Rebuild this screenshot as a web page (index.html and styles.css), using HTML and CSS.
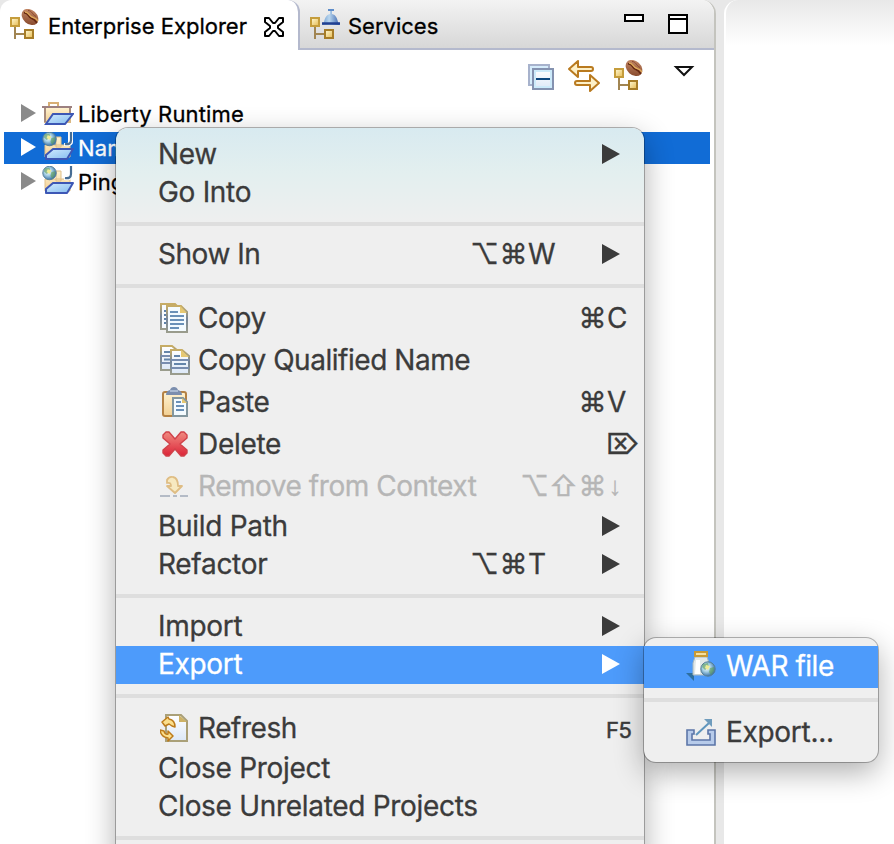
FILE: index.html
```html
<!DOCTYPE html>
<html lang="en">
<head>
<meta charset="utf-8">
<title>Enterprise Explorer</title>
<link rel="stylesheet" href="styles.css">
</head>
<body>
<svg class="defs" width="0" height="0" aria-hidden="true">
  <defs>
    <linearGradient id="gold" x1="0" y1="0" x2="1" y2="1"><stop offset="0" stop-color="#fffbd8"/><stop offset="1" stop-color="#e6b94e"/></linearGradient>
    <linearGradient id="bean" x1="0" y1="0" x2="1" y2="1"><stop offset="0" stop-color="#ce9472"/><stop offset="1" stop-color="#7e3f22"/></linearGradient>
    <linearGradient id="flask" x1="0" y1="0" x2="1" y2="0"><stop offset="0" stop-color="#6d9bd0"/><stop offset=".4" stop-color="#b9d6ee"/><stop offset="1" stop-color="#3862ac"/></linearGradient>
    <linearGradient id="tan" x1="0" y1="0" x2="0" y2="1"><stop offset="0" stop-color="#fff3d2"/><stop offset="1" stop-color="#f2cf92"/></linearGradient>
    <linearGradient id="lid" x1="0" y1="0" x2="1" y2="1"><stop offset="0" stop-color="#d2ebff"/><stop offset="1" stop-color="#83bbee"/></linearGradient>
    <linearGradient id="red" x1="0" y1="0" x2="0" y2="1"><stop offset="0" stop-color="#f08a80"/><stop offset="1" stop-color="#dc2438"/></linearGradient>
    <linearGradient id="paper" x1="0" y1="0" x2="0" y2="1"><stop offset="0" stop-color="#ffffff"/><stop offset="1" stop-color="#dce8f7"/></linearGradient>
    <linearGradient id="edge" x1="0" y1="0" x2="0" y2="1"><stop offset="0" stop-color="#c8ad65"/><stop offset=".5" stop-color="#75869b"/><stop offset="1" stop-color="#9a9c8c"/></linearGradient>
    <radialGradient id="globe" cx=".4" cy=".4" r=".65"><stop offset="0" stop-color="#ffffff"/><stop offset=".45" stop-color="#a5cfe4"/><stop offset="1" stop-color="#2d65a0"/></radialGradient>
    <symbol id="i-nodes" viewBox="0 0 30 32">
      <path d="M5 17v13M5 25h10" stroke="#a18552" stroke-width="2" fill="none"/>
      <rect x="1" y="9" width="8" height="8" fill="url(#gold)" stroke="#c59d3c" stroke-width="2"/>
      <rect x="15" y="21" width="8" height="8" fill="url(#gold)" stroke="#a77d28" stroke-width="2"/>
    </symbol>
    <symbol id="i-explorer" viewBox="0 0 30 32">
      <use href="#i-nodes" width="30" height="32"/>
      <ellipse cx="20" cy="8" rx="9.3" ry="7" transform="rotate(42 20 8)" fill="url(#bean)"/>
      <path d="M14 4c4-1 4 4 7 5s4 2 6 5" stroke="#64270f" stroke-width="1.6" fill="none"/>
      <path d="M15 3c4 0 4 4 7 5s4 1 6 4" stroke="#dea95a" stroke-width="1.4" fill="none"/>
      <path d="M18 1.500c4 0 4 4 8 6" stroke="#8c4a2c" stroke-width="1" fill="none"/>
    </symbol>
    <symbol id="i-services" viewBox="0 0 30 32">
      <use href="#i-nodes" width="30" height="32"/>
      <path d="M18 0h6v2h-2v3c4 1 5 4 6 8l2 3H12l2-3c1-4 2-7 6-8V2h-2z" fill="url(#flask)"/>
      <path d="M12 14.500h18" stroke="#203f91" stroke-width="2.500"/><path d="M18 1h6" stroke="#5e8dca" stroke-width="2"/>
    </symbol>
    <symbol id="i-globe" viewBox="0 0 16 16">
      <circle cx="8" cy="8" r="7.200" fill="url(#globe)" stroke="#557f96"/>
      <path d="M3 3l5-1 1 4-4 3-3-3zM10 7l4-1v4l-3 4-2-3z" fill="#5e9d54" opacity=".6"/><path d="M6 4l4 1-2 4-3-2z" fill="#efec96"/>
    </symbol>
    <symbol id="i-folder" viewBox="0 0 32 24">
      <path d="M7 4V1h9v3" fill="none" stroke="#d8af75" stroke-width="2"/>
      <path d="M3 5v15h25V5z" fill="url(#tan)" stroke="#dab883" stroke-width="2"/>
      <path d="M0 5h30" stroke="#9c8080" stroke-width="2"/><path d="M3 6v14M28 6v7" stroke="#a78b7c" stroke-width="2"/>
      <path d="M11 12h20l-8 10H4z" fill="url(#lid)" stroke="#3d57b5" stroke-width="2"/>
    </symbol>
    <symbol id="i-project" viewBox="0 0 32 30">
      <path d="M3 13h25v12H3zM14 5h5v10h-5z" fill="url(#tan)" stroke="#e0c08a" stroke-width="1"/>
      <path d="M11 17h20l-6 10H4v-4z" fill="url(#lid)" stroke="#3d57b5" stroke-width="2" stroke-linejoin="round"/>
      <use href="#i-globe" x="0" y="-1" width="15" height="16"/>
      <path d="M26 0h5v10q0 5-9 4v-3q4 1 4-1z" fill="#fff"/><path d="M29 0v8q0 5-6 4" stroke="#476d94" stroke-width="2.200" fill="none"/>
    </symbol>
    <symbol id="i-copy" viewBox="0 0 28 30">
      <path d="M1 1h14l4 4v21H1z" fill="#f7fbff" stroke="url(#edge)" stroke-width="2"/>
      <path d="M4 8h4M4 12h4M4 16h4M4 20h4" stroke="#5e82a8" stroke-width="2"/>
      <path d="M7 3h14l6 6v20H7z" fill="#f4fbff" stroke="url(#edge)" stroke-width="2"/>
      <path d="M20 3v7h7z" fill="#e6c872"/>
      <path d="M10 9h8M10 13h14M10 17h14M10 21h14M10 25h9" stroke="#6b91b8" stroke-width="2"/>
    </symbol>
    <symbol id="i-copyq" viewBox="0 0 30 30">
      <path d="M1 1h11l6 5v19H1z" fill="url(#paper)" stroke="url(#edge)" stroke-width="2"/>
      <path d="M1 11h17M1 18h17" stroke="#788daf" stroke-width="2"/><path d="M4 7h7M4 14.500h8" stroke="#6485aa" stroke-width="2"/>
      <path d="M11 5h11l7 6v18H11z" fill="url(#paper)" stroke="url(#edge)" stroke-width="2"/>
      <path d="M21 5v7h8z" fill="#e6c872"/><path d="M11 15h18M11 23h18" stroke="#788daf" stroke-width="2"/><path d="M14 11h6M14 19h12" stroke="#6485aa" stroke-width="2"/>
    </symbol>
    <symbol id="i-paste" viewBox="0 0 28 30">
      <rect x="3" y="5" width="23" height="24" rx="2" fill="url(#tan)" stroke="#b58244" stroke-width="2"/>
      <path d="M6 8q0-4 4-5 1-3 4-3t4 3q4 1 4 5z" fill="#7b8eae"/><path d="M10 4h8" stroke="#a9bad2" stroke-width="2"/>
      <path d="M13 11h10l4 4v14H13z" fill="#f4fbff" stroke="#83979f" stroke-width="2"/><path d="M22 11v5h5z" fill="#e6c872"/>
      <path d="M16 15h5M16 19h8M16 23h8" stroke="#6b91b8" stroke-width="2"/>
    </symbol>
    <symbol id="i-delete" viewBox="0 0 28 28">
      <path d="M3 5l3-3h3l6 7 6-7h3l3 3v3l-7 6 7 6v3l-3 3h-3l-6-7-6 7H6l-3-3v-3l7-6-7-6z" fill="url(#red)" stroke="#d0424a" stroke-width="1.400" stroke-linejoin="round"/>
    </symbol>
    <symbol id="i-remove" viewBox="0 0 28 22">
      <path d="M0 21h10M20 21h8M13 21h4" stroke="#b4bbc6" stroke-width="2"/>
      <path d="M7 5q2-4 6-3 5 1 5 9h4l-7 7-8-7h4q0-4-4-3z" fill="#f7e9c0" stroke="#dfbd84" stroke-width="1.800" stroke-linejoin="round"/>
    </symbol>
    <symbol id="i-refresh" viewBox="0 0 28 28">
      <path d="M6 1h15l6 6v20H6z" fill="url(#paper)" stroke="#aaa078" stroke-width="2"/><path d="M19 1v7h8z" fill="#cdb266"/>
      <path d="M2 8l6-5 1 2q6 1 6 8l-3-1-3-2-4 2z" fill="#fbdf8c" stroke="#bd7b1a" stroke-width="1.500" stroke-linejoin="round"/>
      <path d="M0 16l4 1q1 4 4 3v-3l5 5-5 5v-3q-7-1-8-8z" fill="#fbdf8c" stroke="#bd7b1a" stroke-width="1.500" stroke-linejoin="round"/>
    </symbol>
    <symbol id="i-war" viewBox="0 0 30 30">
      <path d="M0 22h8v8z" fill="#2d6f9f"/>
      <path d="M9 6h12l2 6v12H7V12z" fill="#e2e8e8" stroke="#a8b8bf"/><path d="M10 9h4v14h-5z" fill="#fff"/>
      <rect x="8" y="0" width="14" height="6" fill="#c89a35"/><path d="M10 3h10" stroke="#f4dfa0" stroke-width="2"/>
      <use href="#i-globe" x="14" y="10" width="16" height="16"/>
    </symbol>
    <symbol id="i-export" viewBox="0 0 30 27">
      <path d="M1 11h7v4H6v6h18v-6h-2v-4h7v15H1z" fill="#b7cbea" stroke="#5c76a8" stroke-width="1.600"/>
      <path d="M10 16L23 4" stroke="#5f95bd" stroke-width="2"/><path d="M18 0h8v8z" fill="#6f9cbd"/>
    </symbol>
  </defs>
</svg>

<main class="workbench">
  <section class="view">
    <header class="tabs">
      <div class="tab active">
        <svg class="tab-icon" width="30" height="32"><use href="#i-explorer"/></svg>
        <span>Enterprise Explorer</span>
        <svg class="close" width="22" height="22" viewBox="0 0 22 22"><path d="M2 2h4l4 5h2l4-5h4v4l-5 4v2l5 4v4h-4l-4-5h-2l-4 5H2v-4l5-4v-2L2 6z" fill="#fff" stroke="#000" stroke-width="2" stroke-linejoin="round"/></svg>
      </div>
      <div class="tab">
        <svg class="tab-icon" width="30" height="32"><use href="#i-services"/></svg>
        <span>Services</span>
      </div>
      <div class="window-buttons"><i class="min"></i><i class="max"></i></div>
    </header>
    <div class="toolbar">
      <svg width="26" height="26" viewBox="0 0 26 26"><path d="M1 1h20v20H1z" fill="#d5ecfb" stroke="#a7b2cc" stroke-width="2"/><path d="M5 5h20v20H5z" fill="url(#paper)" stroke="#8492b0" stroke-width="2"/><path d="M7 7h16v16H7z" fill="none" stroke="#cceafa" stroke-width="2"/><path d="M8 15h14" stroke="#0d477e" stroke-width="2"/></svg>
      <svg class="link" width="32" height="32" viewBox="0 0 32 32"><path d="M1 9l9-8v6h13q2 0 2 2t-2 2H10v6zM31 23l-9 8v-6H9q-2 0-2-2t2-2h13v-6z" fill="#fdf0c8" stroke="#b97a1f" stroke-width="2" stroke-linejoin="round"/></svg>
      <svg class="focus" width="30" height="32"><use href="#i-explorer"/></svg>
      <svg class="caret" width="20" height="11" viewBox="0 0 20 11"><path d="M2 1h16l-8 8z" fill="#fff" stroke="#111" stroke-width="2"/></svg>
    </div>
    <div class="tree">
      <div class="node"><i class="twist"></i><svg class="f" width="32" height="24"><use href="#i-folder"/></svg><span>Liberty Runtime</span></div>
      <div class="node selected"><i class="twist"></i><svg class="p" width="32" height="30"><use href="#i-project"/></svg><span>Name</span></div>
      <div class="node"><i class="twist"></i><svg class="p" width="32" height="30"><use href="#i-project"/></svg><span>Ping</span></div>
    </div>
  </section>
  <section class="editor"></section>
</main>

<nav class="menu context">
  <div class="item"><span>New</span><i class="arrow"></i></div>
  <div class="item"><span>Go Into</span></div>
  <hr>
  <div class="item"><span class="tight">Show In</span><kbd class="sub"><b>⌥</b><b>⌘</b>W</kbd><i class="arrow"></i></div>
  <hr>
  <div class="item tall"><svg width="28" height="30"><use href="#i-copy"/></svg><span class="tight">Copy</span><kbd class="two"><b>⌘</b>C</kbd></div>
  <div class="item tall"><svg width="30" height="30"><use href="#i-copyq"/></svg><span class="tight">Copy Qualified Name</span></div>
  <div class="item tall"><svg width="28" height="30"><use href="#i-paste"/></svg><span class="tight">Paste</span><kbd class="two"><b>⌘</b>V</kbd></div>
  <div class="item tall"><svg width="28" height="28"><use href="#i-delete"/></svg><span>Delete</span><kbd class="one"><b>⌦</b></kbd></div>
  <div class="item tall disabled"><svg width="28" height="22"><use href="#i-remove"/></svg><span class="tight">Remove from Context</span><kbd class="four"><b>⌥</b><b>⇧</b><b>⌘</b><b class="down">↓</b></kbd></div>
  <div class="item"><span>Build Path</span><i class="arrow"></i></div>
  <div class="item"><span>Refactor</span><kbd class="sub"><b>⌥</b><b>⌘</b>T</kbd><i class="arrow"></i></div>
  <hr>
  <div class="item"><span>Import</span><i class="arrow"></i></div>
  <div class="item selected"><span>Export</span><i class="arrow"></i></div>
  <hr>
  <div class="item tall"><svg width="28" height="28"><use href="#i-refresh"/></svg><span class="tight">Refresh</span><kbd class="fkey">F5</kbd></div>
  <div class="item"><span>Close Project</span></div>
  <div class="item"><span>Close Unrelated Projects</span></div>
  <hr>
</nav>

<nav class="menu submenu">
  <div class="item tall selected"><svg width="30" height="30"><use href="#i-war"/></svg><span class="tight">WAR file</span></div>
  <hr>
  <div class="item tall"><svg width="30" height="27"><use href="#i-export"/></svg><span>Export...</span></div>
</nav>
</body>
</html>
```
FILE: styles.css
```css
* { box-sizing: border-box; }
body { margin: 0; width: 894px; height: 844px; overflow: hidden; position: relative; background: #e8e8e8; font-family: Inter, "Liberation Sans", sans-serif; font-size: 22px; color: #000; -webkit-text-stroke: .3px; }
svg { display: block; flex: none; overflow: visible; }
.defs { position: absolute; }
.workbench { display: flex; gap: 8px; height: 844px; }
.view { width: 716px; border-right: 2px solid #c4c4be; border-radius: 12px 14px 0 0; background: #fff; overflow: hidden; }
.editor { flex: 1; border-left: 2px solid #fff; border-radius: 14px 0 0 0; background: linear-gradient(#e8e8e8, #fff 46px); }
.tabs { display: flex; height: 50px; background: linear-gradient(#f3f3f3, #d6d6d6); box-shadow: inset 0 -2px #b4b9cd; }
.tab { display: flex; align-items: center; height: 50px; padding: 0 0 0 10px; line-height: 52px; white-space: nowrap; }
.tab.active { width: 300px; border-right: 2px solid #b4b9cd; border-radius: 12px 12px 0 0; background: #fff; }
.tab span { margin-left: 8px; padding-top: 2px; }
.close { margin-left: auto; margin-right: 13px; margin-top: 3px; }
.window-buttons { display: flex; gap: 24px; margin: 14px 26px 0 auto; }
.min, .max { width: 20px; background: #fff; border: 2px solid #000; }
.min { height: 8px; }
.max { height: 20px; box-shadow: inset 0 2px #fff, inset 0 4px #000; }
.toolbar { display: flex; align-items: flex-start; height: 48px; padding: 14px 20px 0 528px; }
.toolbar .link { margin: -4px 0 0 14px; }
.toolbar .focus { margin: -4px 0 0 14px; }
.toolbar .caret { margin: 2px 0 0 30px; }
.tree { margin: 0 4px; }
.node { display: flex; align-items: center; height: 32px; margin-bottom: 2px; padding-left: 17px; line-height: 32px; letter-spacing: .15px; }
.node svg { margin: 0 4px 0 6px; }
.node .p { margin-top: -3px; }
.node.selected { background: #116cd6; color: #fff; }
.twist { margin-top: -2px; border-left: 15px solid #8a8a8a; border-top: 9px solid transparent; border-bottom: 9px solid transparent; }
.selected .twist { border-left-color: #fff; }
.menu { position: absolute; background: #efefef; color: #3b3b3b; font-size: 28px; padding: 8px 0; border-radius: 12px; box-shadow: 0 0 0 1px rgba(0,0,0,.28), 0 10px 30px rgba(0,0,0,.32); }
.context { left: 116px; top: 128px; width: 528px; height: 740px; background: linear-gradient(#d8eaf0, #e3efef 45px, #efefef 98px); }
.submenu { left: 644px; top: 638px; width: 234px; height: 124px; }
.item { display: flex; align-items: center; height: 38px; padding: 0 0 2px 42px; line-height: 36px; white-space: nowrap; }
.item span { letter-spacing: -.3px; }
.item .tight { letter-spacing: -.46px; }
.item.tall { height: 42px; }
.item.selected { background: #4d9bfb; color: #fff; }
.disabled { color: #b6b6b6; }
.item svg { margin: 0 10px 0 2px; }
.item svg[width="30"] { margin-right: 8px; }
.submenu svg[width="30"] { margin-right: 10px; margin-left: 0; }
.menu hr { height: 4px; margin: 10px 0; border: 0; background: #dedede; }
.arrow { margin-left: auto; margin-right: 24px; border-left: 18px solid currentColor; border-top: 10px solid transparent; border-bottom: 10px solid transparent; }
kbd { display: flex; margin-left: auto; font: inherit; }
kbd b { width: 29px; font-weight: 400; text-align: center; }
kbd.sub { width: 132px; }
kbd.sub + .arrow { margin-left: 0; }
kbd.two { width: 66px; }
kbd.one { width: 38px; }
kbd.four { width: 124px; }
kbd .down { width: 14px; margin-left: 1px; font-family: "Liberation Sans", sans-serif; font-size: 26px; }
kbd.fkey { width: 38px; font-size: 22px; letter-spacing: -.5px; padding-top: 4px; -webkit-text-stroke-width: .5px; }
```
